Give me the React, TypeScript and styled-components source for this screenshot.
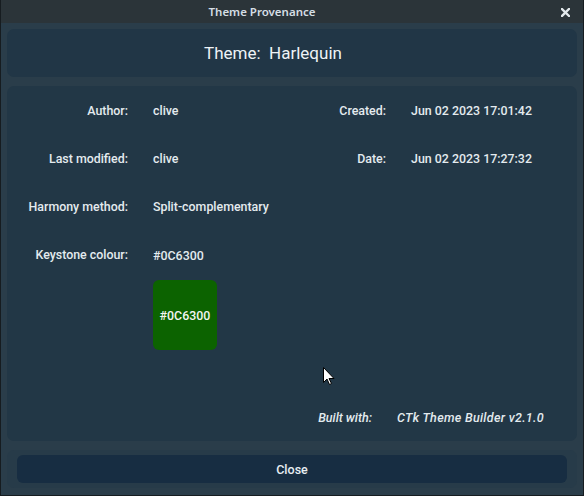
import React from "react";
import styled, { createGlobalStyle } from "styled-components";

const Global = createGlobalStyle`
  html, body { margin: 0; padding: 0; background: #1b2227; }
  body { width: 584px; height: 496px; overflow: hidden; }
  * { box-sizing: border-box; }
`;

const Window = styled.div`
  position: relative;
  width: 584px;
  height: 496px;
  display: flex;
  flex-direction: column;
  background: #2a3d4a;
  border: 1px solid #161c20;
  border-top: none;
  font-family: Roboto, "Liberation Sans", sans-serif;
  color: #e6edf2;
`;

const TitleBar = styled.div`
  position: relative;
  height: 23px;
  flex: none;
  display: flex;
  align-items: center;
  justify-content: center;
  padding-right: 60px;
  background: #2b3439;
  font-family: "Noto Sans", "DejaVu Sans", sans-serif;
  font-size: 11.5px;
  font-weight: 600;
  color: #d5dee4;
`;

const CloseX = styled.svg`
  position: absolute;
  right: 13px;
  top: 8px;
`;

const Body = styled.div`
  flex: 1;
  display: flex;
  flex-direction: column;
  padding: 6px;
  gap: 9px;
`;

const Frame = styled.div<{ $bg: string; $h: number }>`
  background: ${(p) => p.$bg};
  border-radius: 7px;
  height: ${(p) => p.$h}px;
  flex: none;
`;

const HeaderFrame = styled(Frame)`
  display: flex;
  align-items: center;
  justify-content: center;
  padding-right: 38px;
  font-size: 17px;
  font-weight: 400;
  color: #eef3f6;
  white-space: pre;
  padding-bottom: 1px;
`;

const MainFrame = styled(Frame)`
  display: flex;
  flex-direction: column;
  padding-top: 11px;
`;

const Grid = styled.div`
  display: grid;
  grid-template-columns: 121px 140px 68px 1fr;
  column-gap: 25px;
  row-gap: 20px;
  grid-auto-rows: minmax(28px, auto);
  font-size: 12.4px;
  font-weight: 500;
`;

const Label = styled.div`
  text-align: right;
  line-height: 28px;
  height: 28px;
  white-space: nowrap;
  color: #e4ebef;
`;

const Value = styled.div`
  line-height: 28px;
  height: 28px;
  white-space: nowrap;
  color: #e4ebef;
`;

const Stack = styled.div`
  display: flex;
  flex-direction: column;
  gap: 10px;
  padding-top: 1px;
`;

const Swatch = styled.div<{ $color: string }>`
  width: 64px;
  height: 70px;
  border-radius: 6px;
  background: ${(p) => p.$color};
  display: flex;
  align-items: center;
  justify-content: center;
  font-size: 12.4px;
  font-weight: 500;
  color: #f2f6f2;
`;

const BuiltRow = styled.div`
  margin-top: auto;
  margin-bottom: 10px;
  display: flex;
  gap: 25px;
  font-style: italic;
  font-size: 12.5px;
  font-weight: 500;
  line-height: 26px;
  color: #e4ebef;
`;

const BuiltLabel = styled.div`
  width: 365px;
  text-align: right;
  white-space: nowrap;
`;

const BuiltValue = styled.div`
  width: 147px;
  overflow: hidden;
  white-space: nowrap;
  letter-spacing: 0.3px;
`;

const FooterFrame = styled(Frame)`
  display: flex;
  align-items: center;
  padding: 0 10px;
`;

const CloseButton = styled.button`
  width: 100%;
  height: 28px;
  border: none;
  border-radius: 6px;
  background: #172d42;
  color: #e8eef2;
  font-family: Roboto, "Liberation Sans", sans-serif;
  font-size: 12.5px;
  font-weight: 500;
  padding: 0;
`;

const Cursor = styled.svg`
  position: absolute;
  left: 322px;
  top: 367px;
`;

const rows: [string, string, string?, string?][] = [
  ["Author:", "clive", "Created:", "Jun 02 2023 17:01:42"],
  ["Last modified:", "clive", "Date:", "Jun 02 2023 17:27:32"],
  ["Harmony method:", "Split-complementary"],
];

export default function App() {
  return (
    <>
      <Global />
      <Window>
        <TitleBar>
          Theme Provenance
          <CloseX width="9" height="9" viewBox="0 0 9 9">
            <path d="M1 1 L8 8 M8 1 L1 8" stroke="#e2e8ec" strokeWidth="2.4" strokeLinecap="square" />
          </CloseX>
        </TitleBar>
        <Body>
          <HeaderFrame $bg="#213646" $h={48}>Theme:  Harlequin</HeaderFrame>
          <MainFrame $bg="#223746" $h={355}>
            <Grid>
              {rows.map(([l, v, l2, v2]) => (
                <React.Fragment key={l}>
                  <Label>{l}</Label>
                  <Value>{v}</Value>
                  <Label>{l2 ?? ""}</Label>
                  <Value>{v2 ?? ""}</Value>
                </React.Fragment>
              ))}
              <Label>Keystone colour:</Label>
              <Stack>
                <Value>#0C6300</Value>
                <Swatch $color="#0C6300">#0C6300</Swatch>
              </Stack>
            </Grid>
            <BuiltRow>
              <BuiltLabel>Built with:</BuiltLabel>
              <BuiltValue>CTk Theme Builder v2.1.0</BuiltValue>
            </BuiltRow>
          </MainFrame>
          <FooterFrame $bg="#273b49" $h={38}>
            <CloseButton>Close</CloseButton>
          </FooterFrame>
        </Body>
        <Cursor width="12" height="19" viewBox="0 0 12 19">
          <path d="M0.5 0.5 L0.5 15.5 L4 12 L6.5 17.5 L8.5 16.5 L6 11.5 L11 11.5 Z" fill="#ffffff" stroke="#000000" strokeWidth="1" />
        </Cursor>
      </Window>
    </>
  );
}
